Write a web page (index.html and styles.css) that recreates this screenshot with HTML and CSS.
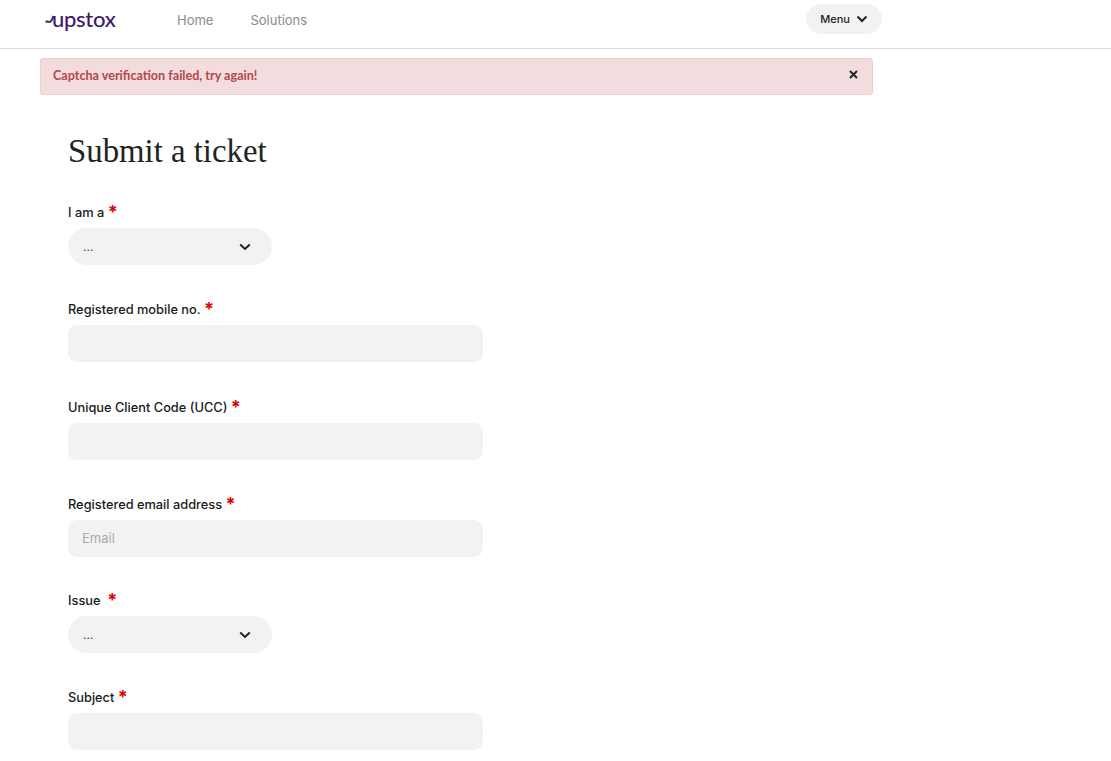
FILE: index.html
```html
<!DOCTYPE html>
<html lang="en">
<head>
<meta charset="utf-8">
<title>Submit a ticket</title>
<link rel="stylesheet" href="styles.css">
</head>
<body>
<header class="topbar">
  <a class="logo" href="#">
    <svg class="logo-tail" width="10" height="10" viewBox="0 0 10 10"><path d="M0.5 6.5 C3 6.5 4 7.5 5.5 6.5 C7 5.5 7.5 3 8.5 1" fill="none" stroke="#3d1a6e" stroke-width="1.9"/></svg><span class="logo-text">upstox</span>
  </a>
  <nav class="nav">
    <a href="#">Home</a>
    <a href="#">Solutions</a>
  </nav>
  <button class="menu" type="button">Menu
    <svg width="12" height="8" viewBox="0 0 12 8"><path d="M1.5 1.5 L6 6 L10.5 1.5" fill="none" stroke="#222" stroke-width="2"/></svg>
  </button>
</header>
<div class="alert">
  <span>Captcha verification failed, try again!</span>
  <svg class="close" width="9" height="9" viewBox="0 0 9 9"><path d="M1 1 L8 8 M8 1 L1 8" fill="none" stroke="#1d2430" stroke-width="2"/></svg>
</div>
<main class="content">
  <h1>Submit a ticket</h1>
  <div class="field">
    <label>I am a <b>*</b></label>
    <div class="select"><span>...</span><svg width="12" height="8" viewBox="0 0 12 8"><path d="M1.2 1.5 L6 6 L10.8 1.5" fill="none" stroke="#222" stroke-width="2"/></svg></div>
  </div>
  <div class="field">
    <label>Registered mobile no. <b>*</b></label>
    <div class="input"></div>
  </div>
  <div class="field field-lower">
    <label>Unique Client Code (UCC) <b>*</b></label>
    <div class="input"></div>
  </div>
  <div class="field field-tight">
    <label>Registered email address <b>*</b></label>
    <div class="input placeholder">Email</div>
  </div>
  <div class="field">
    <label>Issue &nbsp;<b>*</b></label>
    <div class="select"><span>...</span><svg width="12" height="8" viewBox="0 0 12 8"><path d="M1.2 1.5 L6 6 L10.8 1.5" fill="none" stroke="#222" stroke-width="2"/></svg></div>
  </div>
  <div class="field">
    <label>Subject <b>*</b></label>
    <div class="input"></div>
  </div>
</main>
</body>
</html>
```
FILE: styles.css
```css
* { box-sizing: border-box; }
html, body { margin: 0; height: 100%; overflow: hidden; background: #fff; }
body { font-family: Inter, "Liberation Sans", sans-serif; color: #1a1a1a; }

.topbar {
  height: 49px;
  border-bottom: 1px solid #d9d9d9;
  display: flex;
  align-items: center;
  padding: 0 229px 10px 45px;
}
.logo { display: flex; align-items: center; text-decoration: none; width: 132px; margin-top: -1px; }
.logo-tail { flex: none; margin-top: 2px; margin-right: -3px; }
.logo-text { font-family: Lato, sans-serif; font-size: 22px; line-height: 24px; color: #3d1a6e; letter-spacing: -0.3px; font-weight: 500; }
.nav { display: flex; gap: 37px; flex: 1; padding-top: 2px; }
.nav a { font-size: 13px; color: #8a8a8f; text-decoration: none; }
.menu {
  border: 0; background: #f2f2f2; border-radius: 15px;
  height: 30px; width: 76px; padding: 0;
  display: flex; align-items: center; justify-content: center; gap: 6px;
  font: 500 11px Inter, sans-serif; color: #222;
}

.alert {
  margin: 9px 0 0 40px; width: 833px; height: 37px;
  background: #f3dcdd; border: 1px solid #f0cdd0; border-radius: 3px;
  display: flex; align-items: center; justify-content: space-between;
  padding: 0 14px 3px 12px;
  font: 700 12.6px Lato, "Noto Sans", sans-serif; color: #b4474c;
}
.close { margin-top: -2px; }

.content { padding: 0 0 0 68px; }
h1 {
  margin: 37px 0 0; height: 39px;
  font: 400 32.8px/39px "Liberation Serif", serif; color: #222;
}
.field { margin-bottom: 33px; }
h1 + .field { margin-top: 30px; }
.field-lower { margin-top: 34px; }
.field-tight { margin-bottom: 32px; }
label { display: block; height: 20px; margin-bottom: 7px; font-size: 12.8px; line-height: 20px; font-weight: 500; color: #1a1a1a; }
label b { color: #e00000; font-size: 18px; font-weight: 700; position: relative; top: 1px; }
.input, .select { background: #f2f2f2; height: 37px; }
.input { width: 415px; border-radius: 9px; padding: 0 14px; line-height: 37px; font-size: 13px; }
.placeholder { color: #aaaaaa; }
.select {
  width: 204px; border-radius: 19px;
  display: flex; align-items: center; justify-content: space-between;
  padding: 0 21px 0 15px; font-size: 12px; color: #444;
}
```
